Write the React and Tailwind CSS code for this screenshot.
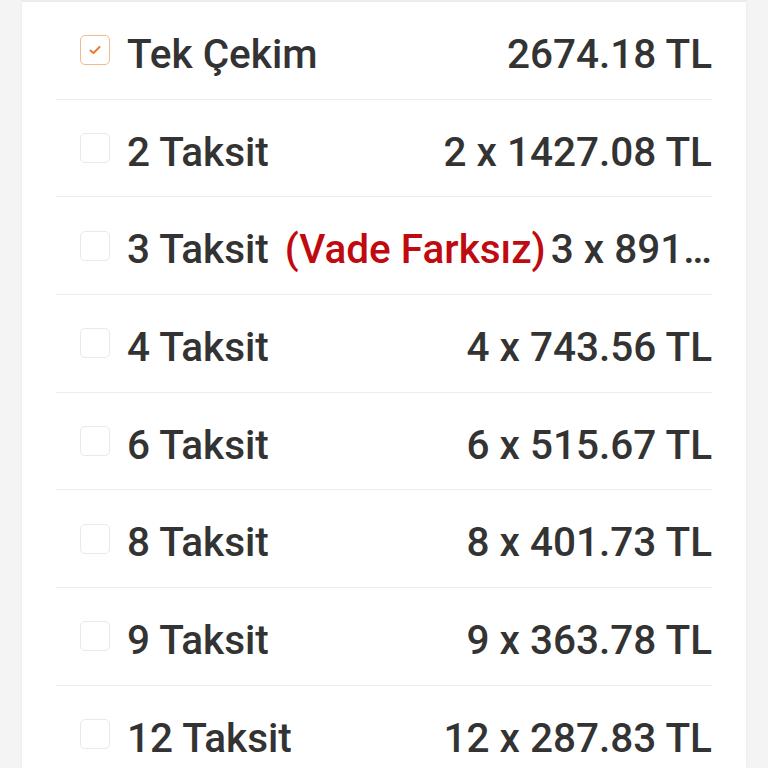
import React from "react";

const rows = [
  { label: "Tek Çekim", value: "2674.18 TL", checked: true },
  { label: "2 Taksit", value: "2 x 1427.08 TL" },
  { label: "3 Taksit", value: "3 x 891.26 TL", note: "(Vade Farksız)" },
  { label: "4 Taksit", value: "4 x 743.56 TL" },
  { label: "6 Taksit", value: "6 x 515.67 TL" },
  { label: "8 Taksit", value: "8 x 401.73 TL" },
  { label: "9 Taksit", value: "9 x 363.78 TL" },
  { label: "12 Taksit", value: "12 x 287.83 TL" },
];

function Box({ checked }) {
  if (checked) {
    return (
      <div className="w-[30px] h-[30px] shrink-0 rounded-[5px] border-[1.5px] border-[#f2b98c] flex items-center justify-center">
        <svg width="14" height="12" viewBox="0 0 14 12">
          <polyline points="2.5,6.5 5.5,9 11.5,3" fill="none" stroke="#e07a35" strokeWidth="2" strokeLinecap="round" strokeLinejoin="round" />
        </svg>
      </div>
    );
  }
  return <div className="w-[30px] h-[30px] shrink-0 rounded-[5px] border-[1.5px] border-[#e9e9e9]" />;
}

export default function App() {
  return (
    <div
      className="w-full h-[768px] overflow-hidden bg-[#f4f4f4] px-[22px]"
      style={{ fontFamily: "Roboto, 'Noto Sans', sans-serif" }}
    >
      <div className="h-full bg-white border-t-[2px] border-[#ececec] shadow-[0_0_2px_rgba(0,0,0,0.08)] px-[34px]">
        {rows.map((r, i) => (
          <div
            key={i}
            className="h-[97.67px] border-b-[1.5px] border-[#ececec] flex items-center pl-[24px] box-border"
          >
            <Box checked={r.checked} />
            <div className="flex-1 min-w-0 flex items-center ml-[17px] pt-[8px] text-[40.5px] font-medium text-[#333333] leading-none">
              <span className="shrink-0 whitespace-nowrap">{r.label}</span>
              {r.note && (
                <span className="shrink-0 whitespace-nowrap ml-[16px] text-[#bf0a0f]">{r.note}</span>
              )}
              <span className="flex-1 min-w-0 ml-[5px] truncate text-right whitespace-nowrap py-1">{r.value}</span>
            </div>
          </div>
        ))}
      </div>
    </div>
  );
}
